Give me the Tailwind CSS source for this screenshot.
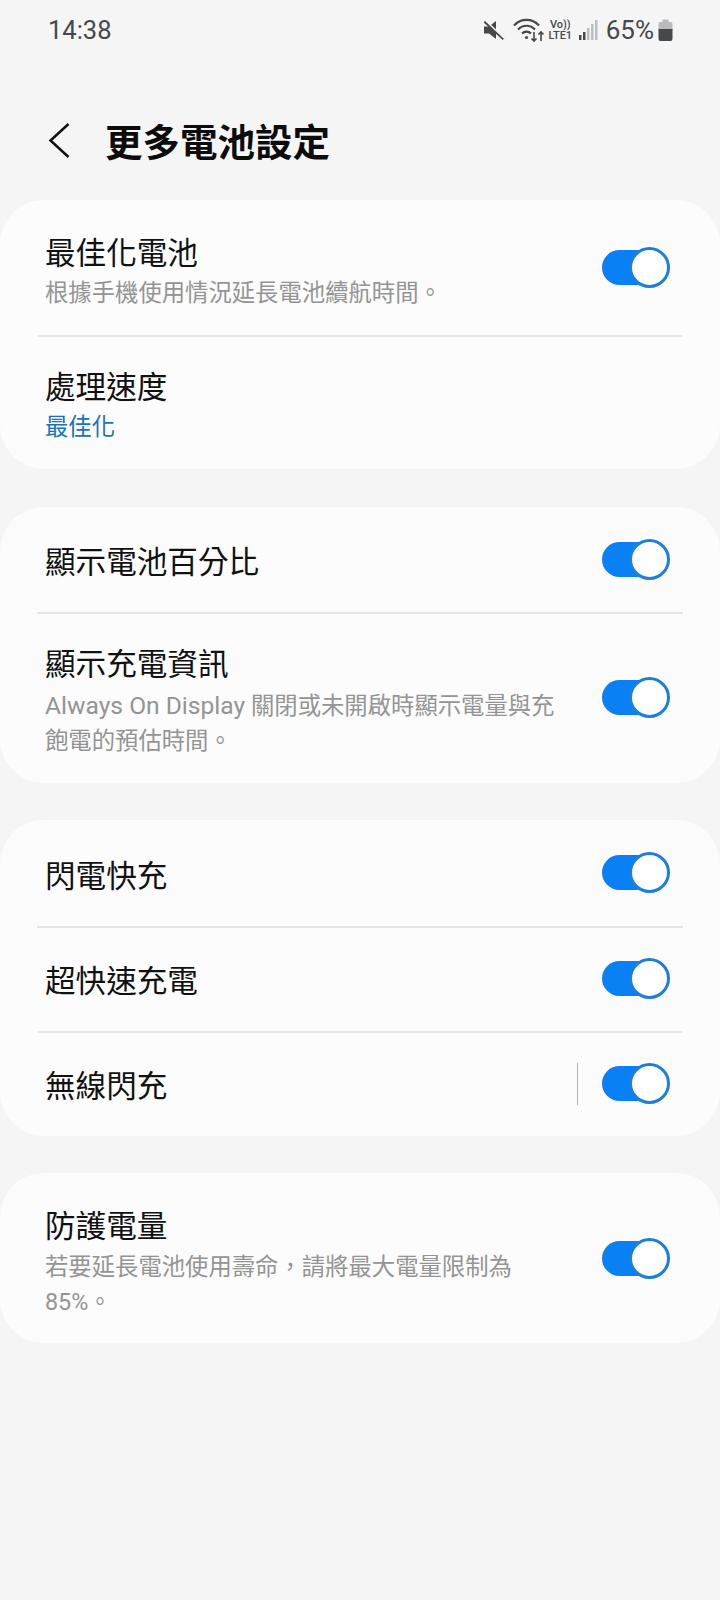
<!DOCTYPE html>
<html lang="zh-TW">
<head>
<meta charset="UTF-8">
<meta name="viewport" content="width=device-width, initial-scale=1.0">
<title>更多電池設定</title>
<script src="https://cdn.jsdelivr.net/npm/@tailwindcss/browser@4"></script>
</head>
<body class="bg-[#f5f5f5] w-[720px] h-[1600px] overflow-hidden font-['Roboto','Noto_Sans_CJK_TC',sans-serif]">

  <!-- status bar -->
  <div class="h-[60px] pl-[48px] pr-[47px] flex items-center justify-between text-[#46484a]">
    <span class="text-[25.500px] leading-none pt-[2px]">14:38</span>
    <div class="flex items-center">
      <svg class="w-[22px] h-[24px]" viewBox="0 0 22 24">
        <path d="M1 8.500h5L13 3v18l-7-5.500H1z" fill="#46484a"/>
        <path d="M1.500 3.500 20.500 21" stroke="#46484a" stroke-width="2.400" fill="none"/>
        <path d="M1.500 1.500 21 20" stroke="#f5f5f5" stroke-width="1.500" fill="none"/>
      </svg>
      <svg class="w-[33px] h-[26px] ml-[8px]" viewBox="0 0 33 26" fill="none">
        <path d="M1 8.500C8 1 19 1 26 8.500" stroke="#46484a" stroke-width="2.200"/>
        <path d="M5 12.500C10 7.500 17 7.500 22 12.500" stroke="#46484a" stroke-width="2.200"/>
        <path d="M9 16.500c2.500-2.500 6.500-2.500 9 0" stroke="#46484a" stroke-width="2.200"/>
        <circle cx="13.500" cy="20.500" r="1.600" fill="#46484a"/>
        <path d="M21 15v9m-2.500-2.500L21 24l2.500-2.500M28 24v-9m-2.500 2.500L28 15l2.500 2.500" stroke="#46484a" stroke-width="1.600"/>
      </svg>
      <div class="ml-[1px] w-[27px] flex flex-col items-center text-[11px] leading-[11.500px] font-medium tracking-[-0.1px]">
        <span>Vo))</span>
        <span>LTE1</span>
      </div>
      <svg class="w-[20px] h-[22px] ml-[4px]" viewBox="0 0 20 22">
        <rect x="1" y="16" width="2.500" height="5" fill="#46484a"/>
        <rect x="5" y="13" width="2.500" height="8" fill="#46484a"/>
        <rect x="9" y="9" width="2.500" height="12" fill="#bdbebf"/>
        <rect x="13" y="5" width="2.500" height="16" fill="#bdbebf"/>
        <rect x="17" y="1" width="2.500" height="20" fill="#bdbebf"/>
      </svg>
      <span class="text-[26px] leading-none ml-[8px]">65%</span>
      <svg class="w-[15px] h-[24px] ml-[4px]" viewBox="0 0 15 24">
        <path d="M4.500 1.500h6V4h2a2 2 0 0 1 2 2v7H.500V6a2 2 0 0 1 2-2h2z" fill="#b9babb"/>
        <path d="M.500 11h14v10a2 2 0 0 1-2 2h-10a2 2 0 0 1-2-2z" fill="#46484a"/>
      </svg>
    </div>
  </div>

  <!-- header -->
  <div class="h-[140px] flex items-start pt-[57px] pl-[48px]">
    <svg class="w-[24px] h-[40px] mt-[3px]" viewBox="0 0 24 40" fill="none">
      <path d="M20.500 4 2.500 20.500 20.500 37" stroke="#111" stroke-width="2.500"/>
    </svg>
    <h1 class="ml-[33px] pt-[2px] text-[37.500px] leading-[48px] font-bold text-[#0c0c0c]">更多電池設定</h1>
  </div>

  <!-- optimize -->
  <section class="bg-[#fcfcfc] rounded-[44px] px-[37px]">
    <div class="h-[137px] flex items-center justify-between border-b-2 border-[#e6e6e6]">
      <div class="pl-[8px] pt-[6px]">
        <div class="text-[30.600px] leading-[45px] text-[#111]">最佳化電池</div>
        <div class="text-[23.350px] leading-[34px] text-[#949494]">根據手機使用情況延長電池續航時間。</div>
      </div>
      <div class="relative w-[68px] h-[41px] mr-[13px]"><div class="absolute left-0 top-[3px] w-[62px] h-[35px] rounded-full bg-[#0a80f5]"></div><div class="absolute right-0 top-0 w-[41px] h-[41px] rounded-full bg-white border-[3px] border-[#1e7fd8]"></div></div>
    </div>
    <div class="h-[132px] flex items-center">
      <div class="pl-[8px] pt-[3px]">
        <div class="text-[30.600px] leading-[45px] text-[#111]">處理速度</div>
        <div class="text-[23.350px] leading-[34px] text-[#1a72b8]">最佳化</div>
      </div>
    </div>
  </section>

  <!-- display -->
  <section class="bg-[#fcfcfc] rounded-[44px] px-[37px] mt-[38px]">
    <div class="h-[107px] flex items-center justify-between border-b-2 border-[#e6e6e6]">
      <div class="pl-[8px] pt-[7px] text-[30.600px] leading-[44px] text-[#111]">顯示電池百分比</div>
      <div class="relative w-[68px] h-[41px] mr-[13px]"><div class="absolute left-0 top-[3px] w-[62px] h-[35px] rounded-full bg-[#0a80f5]"></div><div class="absolute right-0 top-0 w-[41px] h-[41px] rounded-full bg-white border-[3px] border-[#1e7fd8]"></div></div>
    </div>
    <div class="h-[169px] flex items-center justify-between">
      <div class="pl-[8px] w-[520px] pt-[3px]">
        <div class="text-[30.600px] leading-[46px] text-[#111]">顯示充電資訊</div>
        <div class="text-[23.350px] leading-[35px] text-[#949494]"><span class="text-[24.600px]">Always On Display</span> 關閉或未開啟時顯示電量與充</div>
        <div class="text-[23.350px] leading-[35px] text-[#949494]">飽電的預估時間。</div>
      </div>
      <div class="relative w-[68px] h-[41px] mr-[13px] mb-[2px]"><div class="absolute left-0 top-[3px] w-[62px] h-[35px] rounded-full bg-[#0a80f5]"></div><div class="absolute right-0 top-0 w-[41px] h-[41px] rounded-full bg-white border-[3px] border-[#1e7fd8]"></div></div>
    </div>
  </section>

  <!-- charging -->
  <section class="bg-[#fcfcfc] rounded-[44px] px-[37px] mt-[37px]">
    <div class="h-[108px] flex items-center justify-between border-b-2 border-[#e6e6e6]">
      <div class="pl-[8px] pt-[8px] text-[30.600px] leading-[44px] text-[#111]">閃電快充</div>
      <div class="relative w-[68px] h-[41px] mr-[13px] mb-[2px]"><div class="absolute left-0 top-[3px] w-[62px] h-[35px] rounded-full bg-[#0a80f5]"></div><div class="absolute right-0 top-0 w-[41px] h-[41px] rounded-full bg-white border-[3px] border-[#1e7fd8]"></div></div>
    </div>
    <div class="h-[105px] flex items-center justify-between border-b-2 border-[#e6e6e6]">
      <div class="pl-[8px] pt-[4px] text-[30.600px] leading-[44px] text-[#111]">超快速充電</div>
      <div class="relative w-[68px] h-[41px] mr-[13px] mb-[2px]"><div class="absolute left-0 top-[3px] w-[62px] h-[35px] rounded-full bg-[#0a80f5]"></div><div class="absolute right-0 top-0 w-[41px] h-[41px] rounded-full bg-white border-[3px] border-[#1e7fd8]"></div></div>
    </div>
    <div class="h-[103px] flex items-center justify-between">
      <div class="pl-[8px] pt-[4px] text-[30.600px] leading-[44px] text-[#111]">無線閃充</div>
      <div class="flex items-center mb-[2px]">
        <div class="w-[1px] h-[42px] bg-[#b5b5b5] mr-[24px]"></div>
        <div class="relative w-[68px] h-[41px] mr-[13px]"><div class="absolute left-0 top-[3px] w-[62px] h-[35px] rounded-full bg-[#0a80f5]"></div><div class="absolute right-0 top-0 w-[41px] h-[41px] rounded-full bg-white border-[3px] border-[#1e7fd8]"></div></div>
      </div>
    </div>
  </section>

  <!-- protect -->
  <section class="bg-[#fcfcfc] rounded-[44px] px-[37px] mt-[37px]">
    <div class="h-[170px] flex items-center justify-between">
      <div class="pl-[8px] w-[490px] pt-[8px]">
        <div class="text-[30.600px] leading-[46px] text-[#111]">防護電量</div>
        <div class="text-[23.350px] leading-[35px] text-[#949494]">若要延長電池使用壽命，請將最大電量限制為<br>85%。</div>
      </div>
      <div class="relative w-[68px] h-[41px] mr-[13px]"><div class="absolute left-0 top-[3px] w-[62px] h-[35px] rounded-full bg-[#0a80f5]"></div><div class="absolute right-0 top-0 w-[41px] h-[41px] rounded-full bg-white border-[3px] border-[#1e7fd8]"></div></div>
    </div>
  </section>

</body>
</html>
